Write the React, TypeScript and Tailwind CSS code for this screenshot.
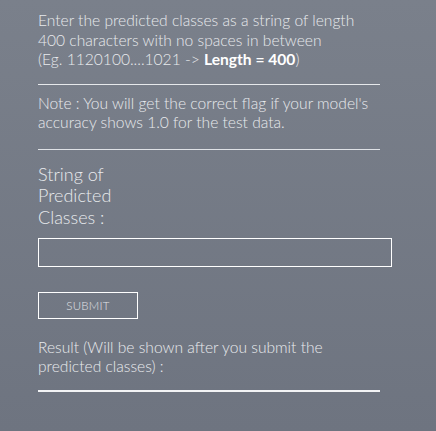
import { useState } from "react";

export default function App() {
  const [value, setValue] = useState("");

  return (
    <div className="min-h-[431px] w-full bg-gradient-to-b from-[#7a808b] to-[#6e7480] text-[#e8eaed] font-light font-['Lato_Light','Lato',sans-serif]">
      <div className="pl-[38px] pt-[11px] pb-[38px]">
        <div className="w-[342px]">
          <p className="text-[15.6px] leading-[19.5px]">
            Enter the predicted classes as a string of length 400 characters with no spaces in between
            <br />
            (Eg. 1120100....1021 -&gt;{" "}
            <b className="font-bold text-white font-['Lato',sans-serif]">Length = 400</b>)
          </p>
          <div className="mt-[14px] h-px bg-[#e6e8eb]" />

          <p className="mt-[9px] text-[15.6px] leading-[19px]">
            Note : You will get the correct flag if your model's accuracy shows 1.0 for the test data.
          </p>
          <div className="mt-[17px] h-px bg-[#dfe2e6]" />

          <label className="mt-[14px] block w-[100px] text-[18px] leading-[21.5px]">
            String of Predicted Classes :
          </label>
        </div>

        <input
          value={value}
          onChange={(e) => setValue(e.target.value)}
          className="mt-[10px] block h-[29px] w-[354px] border border-white bg-transparent px-2 text-sm outline-none"
        />

        <button className="mt-[25px] block h-[27px] w-[100px] border border-white text-[11.5px] tracking-wide text-[#e2e4e8]">
          SUBMIT
        </button>

        <div className="w-[342px]">
          <p className="mt-[19px] text-[15.6px] leading-[19px]">
            Result (Will be shown after you submit the predicted classes) :
          </p>
          <div className="mt-[14px] h-[2px] bg-[#f2f3f5]" />
        </div>
      </div>
    </div>
  );
}
